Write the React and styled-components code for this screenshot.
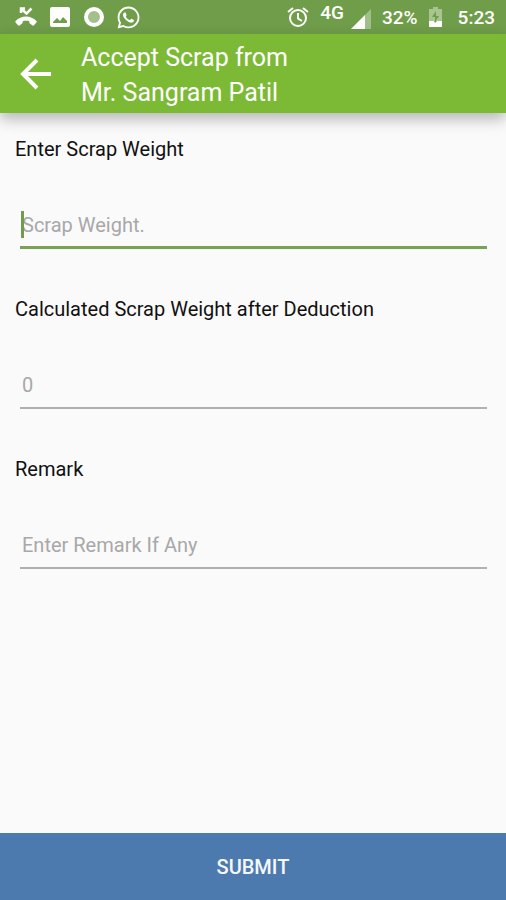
import React, { useState } from "react";
import styled, { createGlobalStyle } from "styled-components";
import { FaWhatsapp } from "react-icons/fa";

const MissedCallIcon = () => (
  <svg width="22" height="20" viewBox="0 0 22 20" aria-hidden="true">
    <path
      d="M6 6V1.500h4M6.500 2l5 4.500 5-5"
      fill="none"
      stroke="#fff"
      strokeWidth="2.500"
    />
    <path
      d="M11 9.500c-4 0-7.600 1.500-10.400 4.500-.5.500-.5 1 0 1.500l2.400 2.800c.5.500 1 .5 1.500.1l2.600-1.800c.4-.3.6-.7.6-1.100v-1.300c2.200-.6 4.400-.6 6.600 0v1.300c0 .4.200.8.600 1.100l2.600 1.800c.5.400 1 .4 1.500-.1l2.400-2.800c.5-.5.500-1 0-1.500C18.600 11 15 9.500 11 9.500z"
      fill="#fff"
    />
  </svg>
);

const PhotoIcon = () => (
  <svg width="20" height="20" viewBox="0 0 20 20" aria-hidden="true">
    <path
      fillRule="evenodd"
      d="M2 0h16a2 2 0 0 1 2 2v16a2 2 0 0 1-2 2H2a2 2 0 0 1-2-2V2a2 2 0 0 1 2-2zM3 16h14v-2l-4-4-3 4-3-3-4 4z"
      fill="#fff"
    />
  </svg>
);

const RecordIcon = () => (
  <svg width="22" height="22" viewBox="0 0 22 22" aria-hidden="true">
    <circle cx="11" cy="11" r="8" fill="#a3c08c" stroke="#fff" strokeWidth="4" />
  </svg>
);

const AlarmIcon = () => (
  <svg
    width="22"
    height="22"
    viewBox="0 0 22 22"
    fill="none"
    stroke="#fff"
    strokeWidth="2"
    aria-hidden="true"
  >
    <circle cx="11" cy="12" r="8" />
    <path d="M1 6l5-4M21 6l-5-4M11 7v5.500l4 2.500" />
  </svg>
);

const SignalIcon = () => (
  <svg width="20" height="20" viewBox="0 0 20 20" aria-hidden="true">
    <path d="M20 0v20H0z" fill="#fff" fillOpacity="0.35" />
    <path d="M14 6v14H0z" fill="#fff" />
  </svg>
);

const BatteryIcon = () => (
  <svg width="13" height="20" viewBox="0 0 13 20" aria-hidden="true">
    <path d="M4 0h5v2h4v12H0V2h4z" fill="#fff" fillOpacity="0.4" />
    <path d="M7 4v5h3l-4 6v-5H3z" fill="#6f9d49" />
    <path d="M0 14h5l1 2 2-2h5v6H0z" fill="#fff" />
  </svg>
);

const BackIcon = () => (
  <svg
    width="32"
    height="32"
    viewBox="0 0 32 32"
    fill="none"
    stroke="#fff"
    strokeWidth="4"
    aria-hidden="true"
  >
    <path d="M17 2L3 16l14 14M3 16h28" />
  </svg>
);

const StatusBar = () => (
  <StatusBarContainer>
    <Notifications>
      <NotificationSlot>
        <MissedCallIcon />
      </NotificationSlot>
      <NotificationSlot>
        <PhotoIcon />
      </NotificationSlot>
      <NotificationSlot>
        <RecordIcon />
      </NotificationSlot>
      <NotificationSlot>
        <FaWhatsapp size={25} />
      </NotificationSlot>
    </Notifications>
    <SystemInfo>
      <AlarmIcon />
      <Signal>
        <Network>4G</Network>
        <SignalIcon />
      </Signal>
      <StatusText>32%</StatusText>
      <Battery>
        <BatteryIcon />
        <StatusText>5:23</StatusText>
      </Battery>
    </SystemInfo>
  </StatusBarContainer>
);

const Field = ({ id, label, placeholder, active }) => {
  const [value, setValue] = useState("");

  return (
    <FieldContainer>
      <FieldLabel htmlFor={id}>{label}</FieldLabel>
      <InputWrapper>
        <FieldInput
          id={id}
          type="text"
          placeholder={placeholder}
          value={value}
          onChange={(e) => setValue(e.target.value)}
          $active={active}
        />
        {active && !value && <Caret />}
      </InputWrapper>
    </FieldContainer>
  );
};

const App = () => {
  return (
    <>
      <GlobalStyle />
      <Screen>
        <StatusBar />
        <AppBar>
          <BackButton type="button" aria-label="Back">
            <BackIcon />
          </BackButton>
          <Title>
            Accept Scrap from
            <br />
            Mr. Sangram Patil
          </Title>
        </AppBar>
        <Form onSubmit={(e) => e.preventDefault()}>
          <Fields>
            <Field
              id="weight"
              label="Enter Scrap Weight"
              placeholder="Scrap Weight."
              active
            />
            <Field
              id="calculated"
              label="Calculated Scrap Weight after Deduction"
              placeholder="0"
            />
            <Field id="remark" label="Remark" placeholder="Enter Remark If Any" />
          </Fields>
          <SubmitButton type="submit">SUBMIT</SubmitButton>
        </Form>
      </Screen>
    </>
  );
};

export default App;

const GlobalStyle = createGlobalStyle`
  * {
    box-sizing: border-box;
  }
  body {
    margin: 0;
    background-color: #fafafa;
    font-family: Roboto, sans-serif;
  }
  svg {
    display: block;
    flex-shrink: 0;
  }
`;

const Screen = styled.div`
  display: flex;
  flex-direction: column;
  min-height: 100vh;
`;

const StatusBarContainer = styled.div`
  display: flex;
  justify-content: space-between;
  height: 34px;
  padding: 0 11px 0 9px;
  color: white;
  background-color: #6f9d49;
`;

const Notifications = styled.div`
  display: flex;
  align-items: center;
`;

const NotificationSlot = styled.div`
  display: flex;
  justify-content: center;
  width: 34px;
`;

const SystemInfo = styled.div`
  display: flex;
  align-items: center;
  gap: 11px;
`;

const Signal = styled.div`
  display: flex;
  align-items: flex-end;
  gap: 7px;
`;

const Battery = styled.div`
  display: flex;
  align-items: center;
  gap: 16px;
`;

const StatusText = styled.span`
  padding-top: 2px;
  font-size: 19px;
  font-weight: 500;
  line-height: 24px;
`;

const Network = styled.span`
  align-self: flex-start;
  padding-bottom: 8px;
  font-size: 19px;
  font-weight: 500;
  line-height: 16px;
`;

const AppBar = styled.header`
  display: flex;
  align-items: center;
  gap: 29px;
  height: 79px;
  padding: 0 20px;
  color: white;
  background-color: #7cba36;
  box-shadow: 0 6px 14px rgba(0, 0, 0, 0.28);
`;

const BackButton = styled.button`
  padding: 0;
  border: none;
  color: inherit;
  background: none;
  cursor: pointer;
`;

const Title = styled.h1`
  margin: 0;
  padding-top: 2px;
  font-size: 25px;
  font-weight: 400;
  line-height: 35px;
`;

const Form = styled.form`
  display: flex;
  flex: 1;
  flex-direction: column;
  justify-content: space-between;
`;

const Fields = styled.div`
  display: flex;
  flex-direction: column;
  gap: 48px;
  padding: 24px 15px;
`;

const FieldContainer = styled.div`
  display: flex;
  flex-direction: column;
  gap: 42px;
`;

const FieldLabel = styled.label`
  color: #111;
  font-size: 20px;
  line-height: 24px;
`;

const InputWrapper = styled.div`
  position: relative;
  margin: 0 4px 0 5px;
`;

const FieldInput = styled.input`
  display: block;
  width: 100%;
  height: 46px;
  padding: 0 2px;
  border: none;
  border-bottom: ${({ $active }) =>
    $active ? "3px solid #77a353" : "2px solid #b0b0b0"};
  border-radius: 0;
  outline: none;
  color: #111;
  background: none;
  font-family: inherit;
  font-size: 20px;

  &::placeholder {
    color: #a8a8a8;
    opacity: 1;
  }
`;

const Caret = styled.span`
  position: absolute;
  top: 8px;
  left: 1px;
  width: 3px;
  height: 27px;
  background-color: #6f9d49;
  pointer-events: none;
`;

const SubmitButton = styled.button`
  height: 67px;
  border: none;
  color: #f4f8fc;
  background-color: #4d7aae;
  font-family: inherit;
  font-size: 20px;
  font-weight: 500;
  cursor: pointer;
`;
